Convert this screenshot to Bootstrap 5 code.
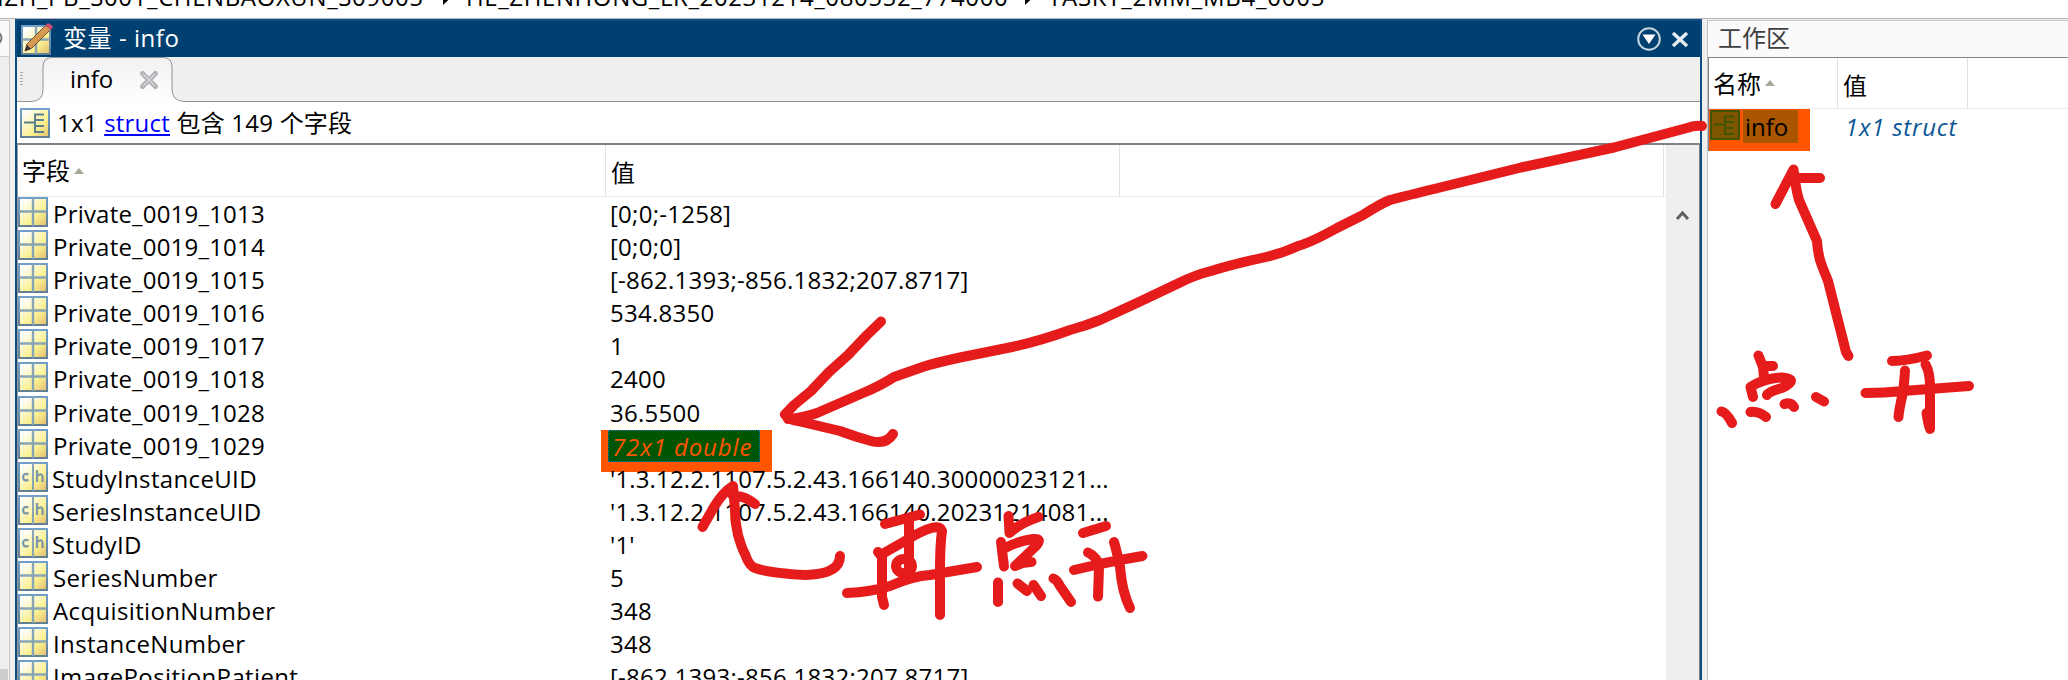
<!DOCTYPE html>
<html lang="zh-CN">
<head>
<meta charset="utf-8">
<title>变量 - info</title>
<link href="https://cdn.jsdelivr.net/npm/bootstrap@5.3.0/dist/css/bootstrap.min.css" rel="stylesheet">
<script src="https://cdn.jsdelivr.net/npm/bootstrap@5.3.0/dist/js/bootstrap.bundle.min.js"></script>
<style>
html,body{height:680px;overflow:hidden}
body{font:24px/33.1px "Open Sans","Noto Sans CJK SC",sans-serif;color:#000;background:#efefef;white-space:nowrap}
svg{display:block;flex:none}
.pathbar{height:19px;background:#fff;border-bottom:1px solid #b4b4b4;overflow:hidden}
.crumbs{margin-top:-20px;letter-spacing:.6px}
.c1{width:455px;margin-left:-14px}.c2{width:582px}.c3{letter-spacing:.75px}
.crumb-gap{width:25px;padding-top:14px}
.main-area{height:661px}
.left-rail{width:10px;border-right:1px solid #c8c8c8;margin-top:1px}
.rail-top{height:37px;background:#fafafa;border-top:1px solid #c8c8c8;border-bottom:1px solid #d0d0d0}
.rail-thumb{height:11px;width:8px;background:#cdcdcd}
.vars{margin-left:5px;width:1687px;border:solid #0f4c81;border-width:2px 2px 0}
.vars-title{height:36px;background:#004070;color:#fff;padding:0 9px 0 4px}
.vt{letter-spacing:.55px;padding-left:10px;margin-top:-2px}
.tabs-row{height:45px}
.tab-name{left:53px;top:5px}
.info-row{height:41px;background:#fff;padding-left:3px}
.it{letter-spacing:.22px;padding-left:7px}
.it a{color:#00f}
.grid-wrap{border-top:2px solid #808287;border-right:1px solid #808287;border-left:1px solid #999;background:#fff}
.head-row{height:52px;border-bottom:1px solid #ececec;line-height:55px}
.hc{border-right:1px solid #e2e2e2;padding-left:5px}
.f1{width:588px;padding-left:4px}.f2{width:514px}
.h3c{width:544px;border-right:1px solid #e2e2e2}
.row-line{height:33.1px}
.row-line .lbl{width:593px;gap:5px;letter-spacing:.36px}
.row-line .lbl.priv{letter-spacing:.2px}
.row-line .lbl.chr{gap:4px}
.row-line .val{letter-spacing:.26px;margin-left:-1px}
.row-line .val.uid{letter-spacing:.14px}
.vbar{width:33px;background:#efefef}
.ws{margin-left:5px;border-left:1px solid #c0c0c0;background:#fff;margin-top:1px}
.ws-title{height:37px;background:#fafafa;border-top:1px solid #c8c8c8;color:#404040;padding-left:10px;line-height:33px}
.ws-body{border-top:1px solid #808287;border-left:1px solid #808287}
.ws-head{height:51px;border-bottom:1px solid #ececec;line-height:55px}
.w1{width:129px;padding-left:4px}.w2{width:130px}
.hot{width:101px;height:42px;background:#ff5500}
.hot-name{background:#aa5500;width:55px;height:33px;margin:1px 0 0 3px;padding-left:2px}
.wsval{color:#0b5596;font-style:italic;margin:1px 0 0 35px;letter-spacing:.75px}
.mark-box{left:601px;top:430px;width:171px;height:42px;background:#ff5500}
.mark-in{left:608px;top:430px;width:152px;height:32px;background:#005500;border:1px dotted #1a76c8;color:#ff5500;font-style:italic;line-height:31px;padding-left:3px;letter-spacing:.9px}
.over{z-index:3}
</style>
</head>
<body class="position-relative">
<svg width="0" height="0" class="position-absolute"><defs>
<linearGradient id="cell" x1="0" y1="0" x2="1" y2="1"><stop offset=".1" stop-color="#fff"/><stop offset=".65" stop-color="#faf08f"/><stop offset="1" stop-color="#e3bf72"/></linearGradient>
<linearGradient id="edge" x1="0" y1="0" x2="0" y2="1"><stop offset="0" stop-color="#72a0cb"/><stop offset="1" stop-color="#5f7f94"/></linearGradient>
<linearGradient id="tabg" x1="0" y1="0" x2="0" y2="1"><stop offset="0" stop-color="#f1f1f4"/><stop offset="1" stop-color="#fff"/></linearGradient>
<symbol id="mat" viewBox="0 0 30 30"><rect width="30" height="30" fill="url(#edge)"/><rect x="2" y="2" width="26" height="26" fill="url(#cell)"/><path d="M15 1v28M1 14.500h28" stroke="#88a5b5" stroke-width="2.400"/></symbol>
<symbol id="chr" viewBox="0 0 30 30"><rect width="30" height="30" fill="url(#edge)"/><rect x="2" y="2" width="26" height="26" fill="url(#cell)"/><path d="M15 1v28" stroke="#88a5b5" stroke-width="2"/><path d="M10.500 12.500q-5-2-5.500 2.700q.5 4.500 5.500 2.700M19 8v12M19 14q5-3.500 5.500.5v5.500" fill="none" stroke="#7d98a6" stroke-width="2.300"/></symbol>
<symbol id="str" viewBox="0 0 30 30"><rect x="1" y="1" width="28" height="28" fill="url(#cell)" stroke="url(#edge)" stroke-width="2"/><path d="M4 14.500h11M24 6.500h-9v17.500h9M15 12h9M15 18h9" fill="none" stroke="#5e808c" stroke-width="2"/></symbol>
</defs></svg>

<div class="pathbar"><div class="crumbs d-flex"><div class="c1">HZH_PB_S001_CHENBAOXUN_S09005</div><div class="crumb-gap"><svg width="10" height="12"><path d="M2 0l7 4.500L2 11z"/></svg></div><div class="d-flex c2"><span class="me-auto">HE_ZHENHONG_LR_20231214_080552_774000</span><div class="crumb-gap"><svg width="10" height="12"><path d="M2 0l7 4.500L2 11z"/></svg></div></div><div class="c3">TASKT_2MM_MB4_0005</div></div></div>
<div class="main-area d-flex">
  <div class="left-rail d-flex flex-column justify-content-between"><div class="rail-top"><svg width="3" height="34"><circle cx="-5" cy="17" r="6.500" fill="none" stroke="#777" stroke-width="2"/></svg></div><div class="rail-thumb"></div></div>
  <section class="vars">
    <div class="vars-title d-flex align-items-center">
      <svg width="32" height="32" viewBox="0 0 32 32"><use href="#mat" x="0" y="2" width="30" height="30"/><path d="M4 28l2-7L25 2l5 4L11 25z" fill="#d59a50" stroke="#705030" stroke-width="1"/><path d="M4 28l2-6 4 4z" fill="#333"/><path d="M24 3l3-3 5 3-2 4z" fill="#c95273"/></svg>
      <span class="vt">变量 - info</span>
      <svg class="ms-auto" width="24" height="24" viewBox="0 0 24 24"><circle cx="12" cy="12" r="10.800" fill="none" stroke="#c5d3df" stroke-width="2"/><path d="M5.500 7.500h13L12 17z" fill="#fff"/></svg>
      <svg class="ms-2" width="22" height="22" viewBox="0 0 22 22"><path d="M4 5l14 13M18 5L4 18" stroke="#e8eef3" stroke-width="3.400"/></svg>
    </div>
    <div class="tabs-row position-relative">
      <svg width="1683" height="45"><path d="M0 44.500h14q12 0 12-12V10q0-9.500 9-9.500h111q9 0 9 9.500v22q0 12 12 12.500H1683V46H0z" fill="url(#tabg)" stroke="#909295"/><path d="M3 15.500h3M3 18.500h3M3 21.500h3M3 24.500h3M3 27.500h3" stroke="#aaa"/><path d="M125.500 16.500l13 13M138.500 16.500l-13 13" stroke="#b0b2b5" stroke-width="5" stroke-linecap="round"/><path d="M126 17l12 12M138 17l-12 12" stroke="#d4d5d9" stroke-width="1.500"/></svg>
      <span class="position-absolute tab-name">info</span>
    </div>
    <div class="info-row d-flex align-items-center"><svg width="30" height="30"><use href="#str"/></svg><span class="it">1x1 <a href="#">struct</a> 包含 149 个字段</span></div>
    <div class="grid-wrap d-flex">
      <div class="flex-grow-1">
        <div class="head-row d-flex"><div class="hc f1 d-flex align-items-center"><span>字段</span><svg class="ms-1" width="10" height="6"><path d="M0 6l5-6 5 6z" fill="#a8a898"/></svg></div><div class="hc f2">值</div><div class="h3c"></div></div>
        <div id="rows"></div>
      </div>
      <div class="vbar"><svg width="33" height="80"><path d="M11 74l5.500-6 5.500 6" fill="none" stroke="#606060" stroke-width="3"/></svg></div>
    </div>
  </section>
  <section class="ws flex-grow-1">
    <div class="ws-title">工作区</div>
    <div class="ws-body">
      <div class="ws-head d-flex"><div class="hc w1 d-flex align-items-center"><span>名称</span><svg class="ms-1" width="10" height="6"><path d="M0 6l5-6 5 6z" fill="#a8a898"/></svg></div><div class="hc w2">值</div></div>
      <div class="d-flex"><div class="hot d-flex"><svg width="31" height="31" viewBox="-1 -1 31 31"><rect x="1" y="1" width="28" height="28" fill="#805500" stroke="#405500" stroke-width="2"/><path d="M4 14.500h11M24 6.500h-9v17.500h9M15 12h9M15 18h9" fill="none" stroke="#405500" stroke-width="2"/></svg><div class="hot-name">info</div></div><div class="wsval">1x1 struct</div></div>
    </div>
  </section>
</div>
<div class="mark-box position-absolute"></div>
<div class="mark-in position-absolute over">72x1 double</div>
<svg class="position-absolute top-0 start-0 over" width="2068" height="680" fill="none" stroke="#e61c1c" stroke-width="10" stroke-linecap="round" stroke-linejoin="round">
<path d="M1702 126Q1694 125 1687 128L1614 147.500L1521 167.500L1436 188.500Q1405 196 1390 200Q1380 204 1363 215L1337 228Q1312 242 1298 246Q1283 253 1266 257Q1234 264 1211 271Q1195 275 1179 283L1139 302L1100 320Q1085 326 1070 330Q1040 341 1012 347L960 357.500Q935 363 924 366.500L894 377Q880 386 863 393L817 413Q803 418 788 419"/>
<path d="M881 321.500L867 335L848 355L829 372L811 391L794 405L785 414.500Q789 420 798 421L840 431Q856 437 871 441Q886 445 893 434"/>
<path d="M702.500 527L714 507Q723 492 733 486L735 510Q735 523 738 535Q742 549 745 554Q749 566 755 568Q768 573 806 575Q840 574 840 556M733 496Q744 495 755 504"/>
<path d="M885 524L920 514.500M909 518V570M878 552L882 557V597L884 605M884 553L905 541Q939 520 942 531Q940 545 940 570V615M847 593Q871 592 890 586Q913 576 930 575L977 567"/><ellipse cx="904" cy="566" rx="8" ry="7"/>
<path d="M1008.500 516L1009.500 533Q1020 523 1038.500 517M1001 542L1004 566.500M1005 548Q1018 541 1033 539Q1043 538 1036 546L1015 566Q1023 562 1031.500 562M998 582.500V602M1017.500 583.500L1027 591M1033.500 585L1041 596M1053.500 578.500Q1057 580 1060 586L1071 602"/>
<path d="M1083 533L1106 526M1074 570L1100 564L1120 560L1142.500 556M1088 552.500Q1098 557 1099 568L1098 596.500M1114 542Q1117 552 1120 567Q1122 592 1130 608"/>
<path d="M1775.500 204L1793.500 169.500Q1796 190 1799 200L1817 241Q1818 256 1822 266L1828 281L1846 352L1848.500 356M1797 178H1820"/>
<path d="M1758.500 355.500L1763 367L1764 377M1766 366H1773M1753 397L1750.500 387Q1765 378 1782 377.500Q1800 379 1782 388Q1768 392 1767 395M1721.500 411.500Q1726 412 1732 423M1750.500 412Q1758 411 1766 417M1784.500 404Q1791 402 1794 407M1816 397L1824 401.500"/>
<path d="M1892 361Q1906 361 1927 355.500M1865.500 393Q1885 393 1903 391L1969 386M1905 370.500Q1904 388 1902 397Q1899 410 1898.500 417M1925.500 364.500Q1930 372 1930 387V429Q1928 423 1926.500 413"/>
</svg>
<script>
const data=[["Private_0019_1013","[0;0;-1258]"],["Private_0019_1014","[0;0;0]"],["Private_0019_1015","[-862.1393;-856.1832;207.8717]"],["Private_0019_1016","534.8350"],["Private_0019_1017","1"],["Private_0019_1018","2400"],["Private_0019_1028","36.5500"],["Private_0019_1029",""],["StudyInstanceUID","'1.3.12.2.1107.5.2.43.166140.30000023121...",1],["SeriesInstanceUID","'1.3.12.2.1107.5.2.43.166140.20231214081...",1],["StudyID","'1'",1],["SeriesNumber","5"],["AcquisitionNumber","348"],["InstanceNumber","348"],["ImagePositionPatient","[-862.1393;-856.1832;207.8717]"]];
document.getElementById('rows').innerHTML=data.map(([name,value,isChar])=>`<div class="row-line d-flex"><div class="lbl d-flex ${isChar?'chr':name.startsWith('Private')?'priv':''}"><svg width="30" height="30"><use href="#${isChar?'chr':'mat'}"/></svg><span>${name}</span></div><span class="val position-relative over ${isChar?'uid':''}">${value}</span></div>`).join('');
</script>
</body>
</html>
